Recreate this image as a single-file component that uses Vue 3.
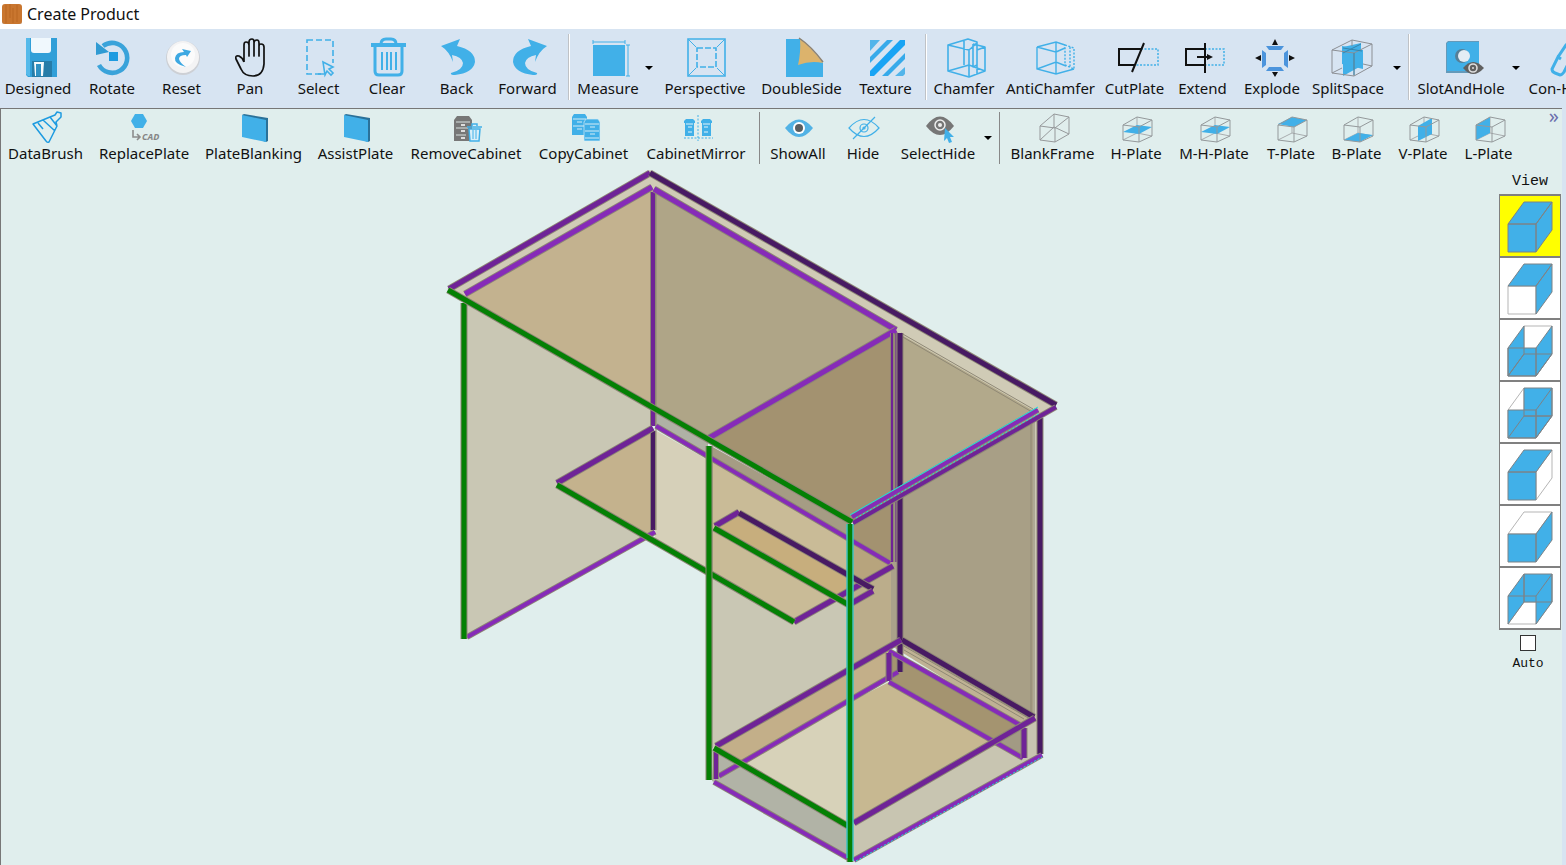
<script setup>
import { ref } from 'vue'

const B = '#41b0e8'
const L = '#862bb8'
const M = '#6f2397'
const D = '#481a63'
const G = '#048004'

const mainTools = [
  { id: 'designed', label: 'Designed' }, { id: 'rotate', label: 'Rotate' }, { id: 'reset', label: 'Reset' },
  { id: 'pan', label: 'Pan' }, { id: 'select', label: 'Select' }, { id: 'clear', label: 'Clear' },
  { id: 'back', label: 'Back' }, { id: 'forward', label: 'Forward' }, { sep: true },
  { id: 'measure', label: 'Measure' }, { drop: 'Measure options' },
  { id: 'perspective', label: 'Perspective' }, { id: 'double', label: 'DoubleSide' }, { id: 'texture', label: 'Texture' },
  { sep: true }, { id: 'chamfer', label: 'Chamfer' }, { id: 'anti', label: 'AntiChamfer' }, { id: 'cut', label: 'CutPlate' },
  { id: 'extend', label: 'Extend' }, { id: 'explode', label: 'Explode' }, { id: 'split', label: 'SplitSpace' },
  { drop: 'SplitSpace options' }, { sep: true }, { id: 'slot', label: 'SlotAndHole' }, { drop: 'SlotAndHole options' },
  { id: 'con', label: 'Con-Handle' },
]

const plateTools = [
  { id: 'brush', label: 'DataBrush' }, { id: 'replace', label: 'ReplacePlate' }, { id: 'plate', label: 'PlateBlanking' },
  { id: 'plate', label: 'AssistPlate' }, { id: 'remove', label: 'RemoveCabinet' }, { id: 'copy', label: 'CopyCabinet' },
  { id: 'mirror', label: 'CabinetMirror' }, { sep: true }, { id: 'show', label: 'ShowAll' }, { id: 'hide', label: 'Hide' },
  { id: 'selhide', label: 'SelectHide' }, { drop: 'SelectHide options' }, { sep: true },
  { id: 'blank', label: 'BlankFrame' },
  { id: 'frame', label: 'H-Plate', fill: '5,20 19,13 34,15 21,22' },
  { id: 'frame', label: 'M-H-Plate', fill: '5,20 19,13 34,15 21,22' },
  { id: 'frame', label: 'T-Plate', fill: '5,12 19,5 34,8 21,15' },
  { id: 'frame', label: 'B-Plate', fill: '5,28 19,21 34,23 21,30' },
  { id: 'frame', label: 'V-Plate', fill: '13,14 27,6 27,22 13,29' },
  { id: 'frame', label: 'L-Plate', fill: '5,13 19,5 19,21 5,28' },
]

const face = {
  front: '9,29 37,29 37,57 9,57',
  top: '9,29 25,7 53,7 37,29',
  right: '37,29 53,7 53,35 37,57',
  left: '9,29 25,7 25,35 9,57',
  back: '25,7 53,7 53,35 25,35',
  bottom: '9,57 25,35 53,35 37,57',
}
const views = [
  { name: 'Solid view', faces: ['front', 'top', 'right'] },
  { name: 'Front view', faces: ['top', 'right'], ghost: 'front' },
  { name: 'Back view', faces: ['left', 'bottom', 'front', 'right'], ghost: 'back' },
  { name: 'Left view', faces: ['back', 'bottom', 'front', 'right'], ghost: 'left' },
  { name: 'Right view', faces: ['front', 'top'], ghost: 'right' },
  { name: 'Top view', faces: ['front', 'right'], ghost: 'top' },
  { name: 'Bottom view', faces: ['back', 'left', 'right'], ghost: 'bottom', rim: true },
]
const activeView = ref(0)
const auto = ref(false)

const panels = [
  ['447,289 650,170 1057,404 852,523', '#d0cbb6'],
  ['464,297 652,188 652,407', '#c3b28f'],
  ['653,190 896,330 710,439 653,406', '#afa587'],
  ['710,439 895,330 895,497 852,521', '#a39270'],
  ['900,334 1034,411 1034,416 900,495', '#b2a98b'],
  ['466,302 652,407 652,533 466,638', '#c9c7b4'],
  ['558,484 652,429 652,540', '#c4b28d'],
  ['655,408 708,439 708,458 655,427', '#afb1a5'],
  ['655,430 708,460 708,573 655,541', '#d6d0b9'],
  ['711,446 848,522 848,540 711,458', '#a59c84'],
  ['711,459 848,539 848,592 794,622 711,574', '#c9bb97'],
  ['711,574 794,622 848,592 848,672 713,748', '#c9c7b4'],
  ['716,526 738,513 873,590 850,604', '#c7ae7d'],
  ['853,523 895,499 895,563 853,539', '#a39270'],
  ['853,540 893,563 853,588', '#b7a47d'],
  ['853,590 895,566 895,645 853,669', '#bbad8b'],
  ['891,500 902,494 902,642 891,646', '#aaa18a'],
  ['902,494 1034,418 1034,716 902,640', '#a89f86'],
  ['1033,418 1040,415 1040,754 1033,754', '#ccc8b5'],
  ['714,750 891,647 891,675 716,776', '#c3af89'],
  ['890,645 903,641 1036,716 1022,727', '#bfb294'],
  ['889,653 1025,727 1025,758 889,682', '#a49470'],
  ['742,764 848,703 848,825', '#d7d2b9'],
  ['848,703 889,682 1002,746 852,825', '#c7b891'],
  ['717,752 738,763 717,776', '#9f957f'],
  ['714,750 848,826 848,859 712,781', '#b1b3a6'],
  ['853,824 1036,718 1042,753 853,860', '#c8c5b1'],
  ['992,744 1025,727 1025,758', '#a29a84'],
]

// x1, y1, x2, y2, colour, width
const edges = [
  [449, 289, 650, 173, M, 5], [650, 173, 1056, 405, D, 5],
  [653, 192, 653, 426, M, 4], [653, 431, 653, 530, D, 4],
  [465, 294, 652, 187, L, 5], [654, 189, 896, 330, L, 5],
  [709, 438, 896, 330, L, 5],
  [892, 333, 892, 562, M, 2], [896, 333, 896, 562, M, 1], [900, 333, 900, 672, D, 5],
  [467, 637, 655, 532, L, 4],
  [557, 483, 653, 428, M, 5], [656, 426, 890, 563, L, 4], [794, 622, 893, 566, M, 5],
  [557, 485, 794, 622, G, 5], [464, 303, 464, 639, G, 5],
  [715, 526, 739, 512, M, 5], [739, 513, 873, 589, D, 5], [852, 603, 873, 591, M, 5], [714, 528, 849, 605, G, 5],
  [1040, 418, 1040, 754, D, 5], [902, 640, 1034, 717, D, 5],
  [716, 746, 901, 640, M, 5], [719, 776, 898, 672, L, 4],
  [889, 651, 1020, 725, L, 4], [889, 653, 889, 681, M, 5],
  [889, 682, 1023, 758, L, 4], [1024, 728, 1024, 758, M, 5],
  [854, 823, 1035, 718, M, 5], [716, 752, 716, 779, M, 4],
  [714, 748, 848, 826, G, 5], [714, 782, 848, 858, L, 4],
  [709, 446, 709, 780, G, 5],
  [852, 517, 1038, 410, L, 4], [853, 523, 1056, 407, M, 4],
  [448, 290, 852, 522, G, 5],
  [854, 860, 1042, 755, L, 4], [850, 524, 850, 862, G, 5],
]
</script>

<template>
  <div class="app">
    <header class="titlebar">
      <svg class="logo" viewBox="0 0 20 20" aria-hidden="true">
        <rect width="20" height="20" rx="3" fill="#c9762f" />
        <path d="M4 1v18M8 0v14M11 4v15M15 1v17" stroke="#b5621f" stroke-width="1" opacity=".7" />
        <path d="M0 17q0 3 3 3h14q3 0 3-3v1q0 2-3 2H3q-3 0-3-2z" fill="#8d4a18" />
      </svg>
      <h1>Create Product</h1>
    </header>

    <nav class="bar main" aria-label="Main tools">
      <template v-for="(t, i) in mainTools" :key="i">
        <span v-if="t.sep" class="sep"></span>
        <button v-else-if="t.drop" class="drop" :aria-label="t.drop"><i></i></button>
        <button v-else class="tool">
          <svg viewBox="0 0 48 46" width="48" height="46" fill="none" aria-hidden="true">
            <g v-if="t.id === 'designed'">
              <path d="M12 4h31v39H14l-2-2z" fill="#319fd8" /><path d="M12 4h4v38h-2l-2-2z" fill="#55b9ea" />
              <path d="M17 4h20v12q0 3-3 3H20q-3 0-3-3z" fill="#f0f8fd" /><path d="M18 27h20v16H18z" fill="#267ca8" />
              <path d="M20 28h10l-1 14h-8z" fill="#f5fafc" /><path d="M22 30h5v12h-5z" fill="#2f91c3" />
            </g>
            <g v-else-if="t.id === 'rotate'">
              <path d="M11 31A15 15 0 1 0 15 12" stroke="#3aa3da" stroke-width="4.6" /><path d="M8 8v13l13-3z" fill="#309bd3" />
              <path d="M21 18h9v9h-9z" fill="#1e9be0" />
            </g>
            <g v-else-if="t.id === 'reset'">
              <circle cx="25" cy="24" r="17" fill="#cdd0d5" /><circle cx="25" cy="23" r="16" fill="#f3f3f4" /><circle cx="25" cy="21" r="12" fill="#fbfbfb" />
              <path d="M28 33q-12-3-11-9 1-6 9-6l-2-3 9 2-4 6-1-2q-7 0-7 4 1 4 7 8z" fill="#3da8e2" />
            </g>
            <path v-else-if="t.id === 'pan'" d="M18 28V11q0-3 2-3 3 0 3 3v11V8q0-3 3-3 2 0 2 3v14V9q0-3 3-3 2 0 2 3v13V12q0-2 2-2 3 0 3 3v17q-1 12-11 12-9 0-12-7l-5-10q-1-4 3-3 4 2 5 6" stroke="#111" stroke-width="1.7" stroke-linejoin="round" />
            <g v-else-if="t.id === 'select'">
              <path d="M12 6h26v34H12z" :stroke="B" stroke-width="1.6" stroke-dasharray="6 3" /><path d="M26 26h14v16H26z" fill="#d7e4f2" />
              <path d="M28 28l10 5-4 2 4 4-2 2-4-4-2 4z" :stroke="B" stroke-width="1.6" /><path d="M38 26v3M23 40h6" :stroke="B" stroke-width="1.6" />
            </g>
            <g v-else-if="t.id === 'clear'" :stroke="B">
              <path d="M8 11h35" stroke-width="4" /><path d="M18 10q0-5 5-5h5q5 0 5 5" stroke-width="3" />
              <path d="M12 13v24q0 4 4 4h19q4 0 4-4V13" stroke-width="3" /><path d="M19 18v18M24 18v18M28 18v18M33 18v18" stroke-width="2" />
            </g>
            <path v-else-if="t.id === 'back'" d="M8 12l19-7-3 7q18 4 18 16-2 11-20 13-5 0-4-2 12-3 12-10-1-6-11-8l1 7Q16 17 8 12z" :fill="B" />
            <path v-else-if="t.id === 'forward'" d="M43 12L24 5l3 7Q9 16 9 28q2 11 20 13 5 0 4-2-12-3-12-10 1-6 11-8l-1 7Q35 17 43 12z" :fill="B" />
            <g v-else-if="t.id === 'measure'">
              <path d="M9 11h32v31H9z" :fill="B" /><path d="M9 8h32M9 6v4M41 6v4M44 11v31M42 11h4M42 42h4" :stroke="B" />
            </g>
            <g v-else-if="t.id === 'perspective'" :stroke="B">
              <path d="M7 5h37v37H7z" stroke-width="1.6" /><path d="M7 5l8 8M44 5l-8 8M7 42l8-8M44 42l-8-8" />
              <path d="M16 14h19v19H16z" stroke-width="1.6" stroke-dasharray="6 2" />
            </g>
            <g v-else-if="t.id === 'double'">
              <path d="M8 5h15l22 24v14H8z" :fill="B" /><path d="M22 5q11 8 23 24-12-3-25 2 3-13 2-26z" fill="#dcb36c" /><path d="M21 4q12 8 24 24" stroke="#8d8170" stroke-width="1.5" />
            </g>
            <g v-else-if="t.id === 'texture'">
              <path d="M8 6h10L8 17z" fill="#52b5ea" /><path d="M25 6h6L8 29v-6z" fill="#36aaea" /><path d="M38 6h5v5L12 42H8v-5z" fill="#18a4f4" />
              <path d="M43 19v6L26 42h-6z" fill="#36aaea" /><path d="M43 33v7l-2 2h-8z" fill="#52b5ea" />
            </g>
            <g v-else-if="t.id === 'chamfer'" :stroke="B" stroke-width="1.6" stroke-linejoin="round">
              <path d="M8 11l20-6 9 3v8l8-3v24l-16 6-21-6zM8 11l21 5V42M29 16l8-7M37 8v32M33 10v23l4-2M33 10l12 3M8 37l21-6 16 6M24 6v25" />
            </g>
            <g v-else-if="t.id === 'anti'" :stroke="B" stroke-width="1.4">
              <path d="M10 13l19-5 9 3M10 13v22l19 5 18-5M10 13l19 5v22M29 18l9-4M10 35l19-7 10 4M29 8v20" /><path d="M38 11l9 3v21l-9-4zM43 13v20" stroke-dasharray="2 1.5" />
            </g>
            <g v-else-if="t.id === 'cut'">
              <path d="M30 15h17v16H24" :stroke="B" stroke-width="1.5" stroke-dasharray="2 1.5" /><path d="M30 15H8v16h16M33 9L21 38" stroke="#111" stroke-width="2" />
            </g>
            <g v-else-if="t.id === 'extend'">
              <path d="M26 15h19v16H26" :stroke="B" stroke-width="1.5" stroke-dasharray="2 1.5" /><path d="M25 15H7v16h18M26 9v30M18 23h12" stroke="#111" stroke-width="2" /><path d="M28 20l6 3-6 3z" fill="#111" />
            </g>
            <g v-else-if="t.id === 'explode'">
              <path d="M18 12h18l-3 4H21zM18 37h18l-3-4H21zM14 16l4 3v12l-4 3zM40 16l-4 3v12l4 3z" fill="#4c94dc" />
              <path d="M27 5l3 6h-6zM27 43l3-5h-6zM7 24l6-3v6zM47 24l-6-3v6z" fill="#111" />
            </g>
            <g v-else-if="t.id === 'split'">
              <path d="M19 13l18-4v23l-18 10z" :fill="B" /><path d="M18 12l21 4v19l-21-5z" :fill="B" />
              <path d="M8 16l20-10 20 4v22l-18 10-22-3zM8 16l22 3 18-9M30 19v23M28 6v6M8 39l10-5M39 30l9 2" stroke="#8c8f94" />
              <path d="M19 14l19 3M30 19v22M37 10l-18 9" stroke="#3585ad" />
            </g>
            <g v-else-if="t.id === 'slot'">
              <path d="M11 7h31v30l-2 2H9V9z" fill="#27719b" opacity=".65" /><path d="M12 8h30v29H10V9z" :fill="B" /><circle cx="25" cy="22" r="7" fill="#567f97" /><circle cx="27" cy="22" r="6" fill="#e4edf4" />
              <path d="M26 34q10-12 21 0-11 12-21 0z" fill="#606060" /><circle cx="36" cy="34" r="4" stroke="#ddd" stroke-width="1.6" /><circle cx="36" cy="34" r="1" fill="#ddd" />
            </g>
            <path v-else d="M15 25l-3-2-6 12q0 3 3 4l5 2q2 0 4-3l5-10M12 23l8-12q3-3 6-1l7 4" :stroke="B" stroke-width="3" />
          </svg>
          <span>{{ t.label }}</span>
        </button>
      </template>
    </nav>

    <div class="body">
      <main class="workspace">
        <nav class="bar plates" aria-label="Plate tools">
          <template v-for="(t, i) in plateTools" :key="i">
            <span v-if="t.sep" class="sep"></span>
            <button v-else-if="t.drop" class="drop" :aria-label="t.drop"><i></i></button>
            <button v-else class="tool">
              <svg viewBox="0 0 36 32" width="36" height="32" fill="none" aria-hidden="true">
                <g v-if="t.id === 'brush'" stroke="#1e9be0" stroke-width="1.5" stroke-linejoin="round">
                  <path d="M5 12l17-7 7 9-8 16q-2 1-3-1zM22 5l5-2 2-3 4 1v4l-5 5 1 4M15 8l12 11M10 11l5 6" />
                </g>
                <g v-else-if="t.id === 'replace'">
                  <path d="M9 2h8l4 7-4 7H9L5 9z" :fill="B" /><path d="M7 18v7h6M11 22l3 3-3 3" stroke="#8c8c8c" stroke-width="1.6" />
                  <text x="16" y="28" font-size="9" font-weight="bold" font-style="italic" fill="#858585">CAD</text>
                </g>
                <g v-else-if="t.id === 'plate'">
                  <path d="M6 3l2-1 24 4v23l-2 1-3-1z" fill="#2a7199" /><path d="M6 3l24 5v22L6 25z" :fill="B" />
                </g>
                <g v-else-if="t.id === 'remove'">
                  <path d="M9 4h12l3 4v21H6V8z" fill="#777" /><path d="M8 10h14M8 16h12M8 23h10" stroke="#d9e2e1" /><path d="M13 13h4M13 19h4M13 26h4" stroke="#fff" stroke-width="1.5" />
                  <path d="M19 15h15M21 17l1 12h9l1-12zM24 14v-2h5v2" fill="#d9eff9" :stroke="B" stroke-width="1.5" /><path d="M25 18v9M28 18v9" :stroke="B" />
                </g>
                <g v-else-if="t.id === 'copy'">
                  <path d="M8 2h11l2 3v18H6V5z" :fill="B" /><path d="M7 7h13M7 14h13M11 10h5M11 17h5" stroke="#d5ecf5" />
                  <path d="M20 7h12l2 3v19H18V10z" :fill="B" stroke="#d5ecf5" stroke-width=".7" /><path d="M19 12h14M19 19h14M19 26h14M24 15h5M24 22h5" stroke="#d5ecf5" />
                </g>
                <g v-else-if="t.id === 'mirror'">
                  <path d="M8 7h7l2 2v2h-1v13H7V11H6V9zM25 7h7l2 2v2h-1v13h-9V11h-1V9z" :fill="B" /><path d="M8 12h7M25 12h7M10 15h4M10 20h4M26 15h4M26 20h4" stroke="#e3f4fa" />
                  <path d="M20 3v26M6 26h29" :stroke="B" stroke-dasharray="2 1.5" />
                </g>
                <g v-else-if="t.id === 'show'">
                  <path d="M5 16q14-17 28 0-14 18-28 0z" fill="#52b2e5" /><circle cx="19" cy="16" r="6" fill="#fff" /><circle cx="19" cy="16" r="4" fill="#595d60" />
                </g>
                <g v-else-if="t.id === 'hide'" :stroke="B" stroke-width="1.2">
                  <path d="M4 16q15-17 30 0-15 17-30 0zM30 5L8 27" /><circle cx="19" cy="16" r="4" /><circle cx="19" cy="16" r="1" />
                </g>
                <g v-else-if="t.id === 'selhide'">
                  <path d="M6 14q14-19 28 0-14 18-28 0z" fill="#767676" /><circle cx="20" cy="13" r="5" stroke="#eee" stroke-width="1.5" /><circle cx="20" cy="13" r="2" fill="#eee" /><path d="M25 16l9 9h-4l2 5-3 1-2-5-3 3z" :fill="B" />
                </g>
                <path v-else-if="t.id === 'blank'" d="M5 14L19 2l15 3v17L20 30 5 28zM5 14l15 2L34 5M20 16v14M19 2v13L5 28M19 15l15 7" stroke="#96999b" />
                <g v-else>
                  <path d="M19 5v16L5 28M19 21l15 3" stroke="#a9adaf" /><polygon :points="t.fill" :fill="B" />
                  <path d="M5 13l14-8 15 3v16l-13 6-16-2zM5 13l16 2 13-7M21 15v15" stroke="#94999b" />
                </g>
              </svg>
              <span>{{ t.label }}</span>
            </button>
          </template>
          <button class="more" aria-label="More tools">»</button>
        </nav>

        <div class="content">
          <section class="stage" aria-label="Desk model">
            <svg viewBox="437 165 625 700" width="625" height="700" fill="none">
              <polygon v-for="(p, i) in panels" :key="'p' + i" :points="p[0]" :fill="p[1]" />
              <path d="M901 333L1033 409M901 336L1032 412M1031 418V714M1034 418V714M902 645L1030 719M904 650L1024 719M712 446V748M656 193V530" stroke="#8f8875" />
              <g v-for="(e, i) in edges" :key="'e' + i">
                <path :d="`M${e[0]} ${e[1]}L${e[2]} ${e[3]}`" stroke="#8c8575" :stroke-width="e[5] + 2" />
                <path :d="`M${e[0]} ${e[1]}L${e[2]} ${e[3]}`" :stroke="e[4]" :stroke-width="e[5]" />
              </g>
              <path d="M850 515L1038 407M847 524V858M853 524V861" stroke="#19dfe3" />
              <path d="M856 518L1040 413M856 861L1042 757" stroke="#19dfe3" stroke-dasharray="2 2" />
            </svg>
          </section>

          <aside class="views">
            <h2>View</h2>
            <div class="tiles">
              <button v-for="(v, i) in views" :key="v.name" :class="{ on: activeView === i }" :aria-label="v.name" @click="activeView = i">
                <svg viewBox="1 1 60 60" aria-hidden="true">
                  <polygon v-if="v.ghost" :points="face[v.ghost]" fill="#fff" stroke="#b5b5b5" />
                  <polygon v-for="f in v.faces" :key="f" :points="face[f]" :fill="B" />
                  <polygon v-for="f in v.faces" :key="f + 'l'" :points="face[f]" fill="none" stroke="#7d8286" />
                  <path v-if="v.rim" d="M9 29h28" stroke="#7d8286" />
                </svg>
              </button>
            </div>
            <label class="auto"><input v-model="auto" type="checkbox">Auto</label>
          </aside>
        </div>
      </main>
    </div>
  </div>
</template>

<style>
html, body { margin: 0; overflow: hidden; }
</style>

<style scoped>
.app { display: flex; flex-direction: column; height: 100vh; overflow: hidden; font-family: "Noto Sans", "Open Sans", sans-serif; color: #111; background: #d7e4f2; }
button { padding: 0; border: 0; background: none; font: inherit; color: inherit; }
.titlebar { display: flex; align-items: center; gap: 5px; flex: none; height: 27px; padding: 0 0 2px 2px; background: #fff; }
.logo { width: 20px; height: 20px; }
h1 { margin: 0; font-size: 16px; line-height: 20px; font-weight: 400; }
.bar { display: grid; flex: none; }
.main { height: 74px; padding-top: 5px; grid-template-columns: 76px 72px 67px 70px 67px 70px 69px 73px 10px 68px 14px 98px 95px 73px 8px 68px 105px 63px 73px 66px 86px 12px 12px 92px 18px 90px; }
.plates { height: 53px; padding-top: 3px; grid-template-columns: 89px 108px 111px 93px 128px 107px 118px 8px 70px 60px 90px 10px 12px 95px 72px 84px 70px 61px 72px 59px 1fr; }
.tool { display: flex; flex-direction: column; align-items: center; justify-content: flex-start; font-size: 15px; line-height: 18px; white-space: nowrap; }
.tool svg { flex: none; overflow: visible; }
.main .tool svg { margin-bottom: -1px; }
.sep { justify-self: center; width: 1px; background: #bfc2c6; border-right: 1px solid #fff; height: 66px; }
.plates .sep { height: 52px; background: #888; border: 0; }
.drop { display: flex; align-items: center; justify-content: center; height: 68px; }
.plates .drop { height: 52px; }
.drop i { border: 4px solid transparent; border-top-color: #000; border-bottom: 0; }
.more { align-self: start; justify-self: end; margin-top: -8px; padding-right: 3px; font-size: 20px; line-height: 24px; color: #6b6fae; }
.body { flex: 1; min-height: 0; padding-right: 4px; }
.workspace { display: flex; flex-direction: column; height: 100%; box-sizing: border-box; border-top: 1px solid #777; border-left: 1px solid #777; background: #e0eeed; overflow: hidden; }
.content { display: flex; flex: 1; min-height: 0; }
.stage { display: flex; justify-content: center; flex: 1; overflow: hidden; }
.stage svg { flex: none; }
.views { display: flex; flex-direction: column; align-items: center; flex: none; width: 64px; padding-top: 7px; font-family: "Liberation Mono", monospace; }
h2 { margin: 0 0 2px; font-size: 15px; line-height: 20px; font-weight: 400; }
.tiles { display: grid; gap: 2px; background: #808080; border: 1px solid #808080; border-width: 2px 1px; }
.tiles button { width: 60px; height: 60px; background: #fff; border: 0; }
.tiles button.on { background: #ff0; }
.tiles svg { display: block; width: 60px; height: 60px; }
.auto { display: flex; flex-direction: column; align-items: center; gap: 5px; margin-top: 5px; padding-right: 4px; font-size: 13px; line-height: 16px; }
.auto input { appearance: none; width: 16px; height: 16px; margin: 0; background: #fff; border: 1px solid #333; }
</style>
